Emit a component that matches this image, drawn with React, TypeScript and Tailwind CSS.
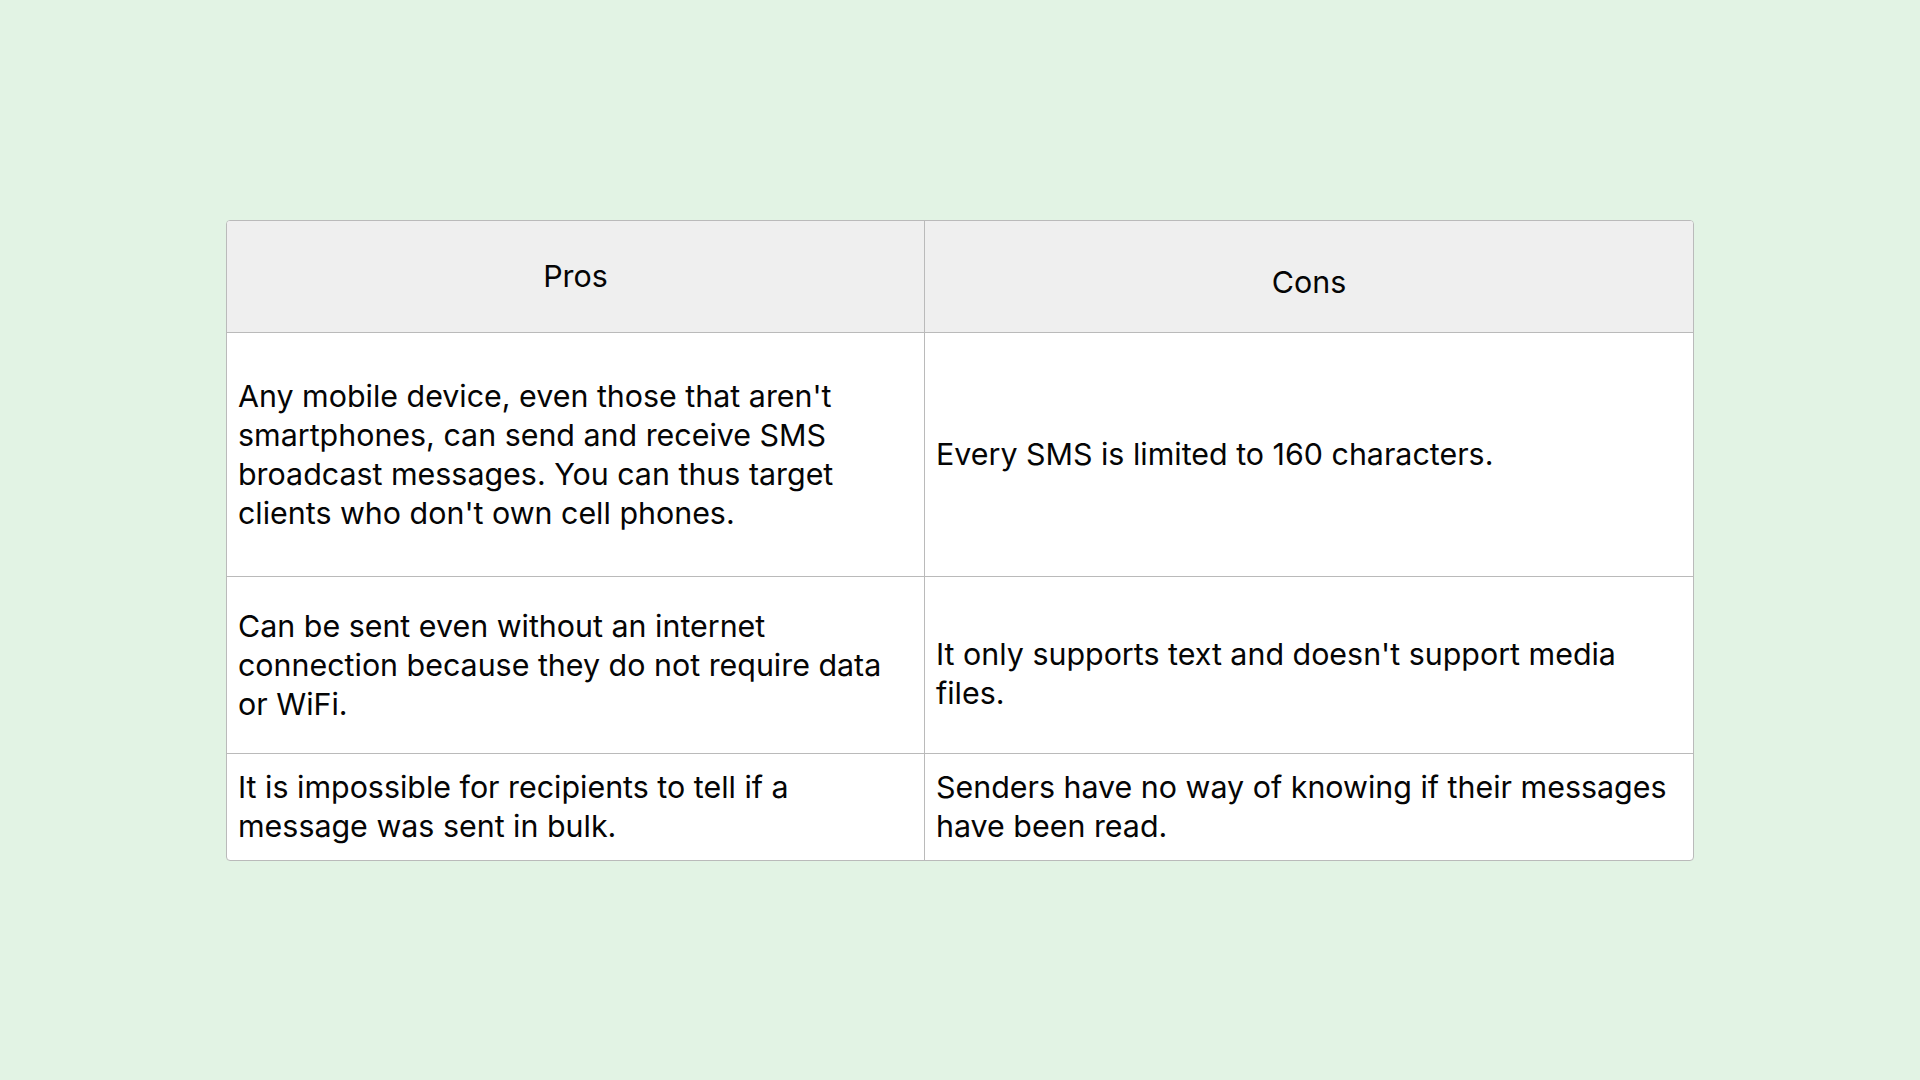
const rows = [
  {
    h: "h-[243px]",
    pros: "Any mobile device, even those that aren't smartphones, can send and receive SMS broadcast messages. You can thus target clients who don't own cell phones.",
    cons: "Every SMS is limited to 160 characters.",
    consPad: "",
  },
  {
    h: "h-[176px]",
    pros: "Can be sent even without an internet connection because they do not require data or WiFi.",
    cons: "It only supports text and doesn't support media files.",
    consPad: "pt-[18px]",
  },
  {
    h: "h-[106px]",
    pros: "It is impossible for recipients to tell if a message was sent in bulk.",
    cons: "Senders have no way of knowing if their messages have been read.",
    consPad: "",
  },
];

export default function App() {
  return (
    <div className="min-h-screen w-full bg-[#e2f3e4] pt-[220px] font-['Inter',sans-serif] text-[30.4px] leading-[39px] text-[#050505]">
      <div className="mx-auto w-[1468px] overflow-hidden rounded-[4px] border border-[#bababa] bg-white">
        <div className="grid grid-cols-[698px_1fr] border-b border-[#bababa] bg-[#efefef] h-[112px]">
          <div className="flex items-center justify-center border-r border-[#bababa]">Pros</div>
          <div className="flex items-center justify-center pt-3">Cons</div>
        </div>
        {rows.map((r, i) => (
          <div
            key={i}
            className={`grid grid-cols-[698px_1fr] ${r.h} ${i < rows.length - 1 ? "border-b border-[#bababa] box-content" : ""}`}
          >
            <div className="flex items-center border-r border-[#bababa] pl-[11px] pr-3">
              <p>{r.pros}</p>
            </div>
            <div className={`flex items-center pl-[11px] pr-3 ${r.consPad}`}>
              <p>{r.cons}</p>
            </div>
          </div>
        ))}
      </div>
    </div>
  );
}
